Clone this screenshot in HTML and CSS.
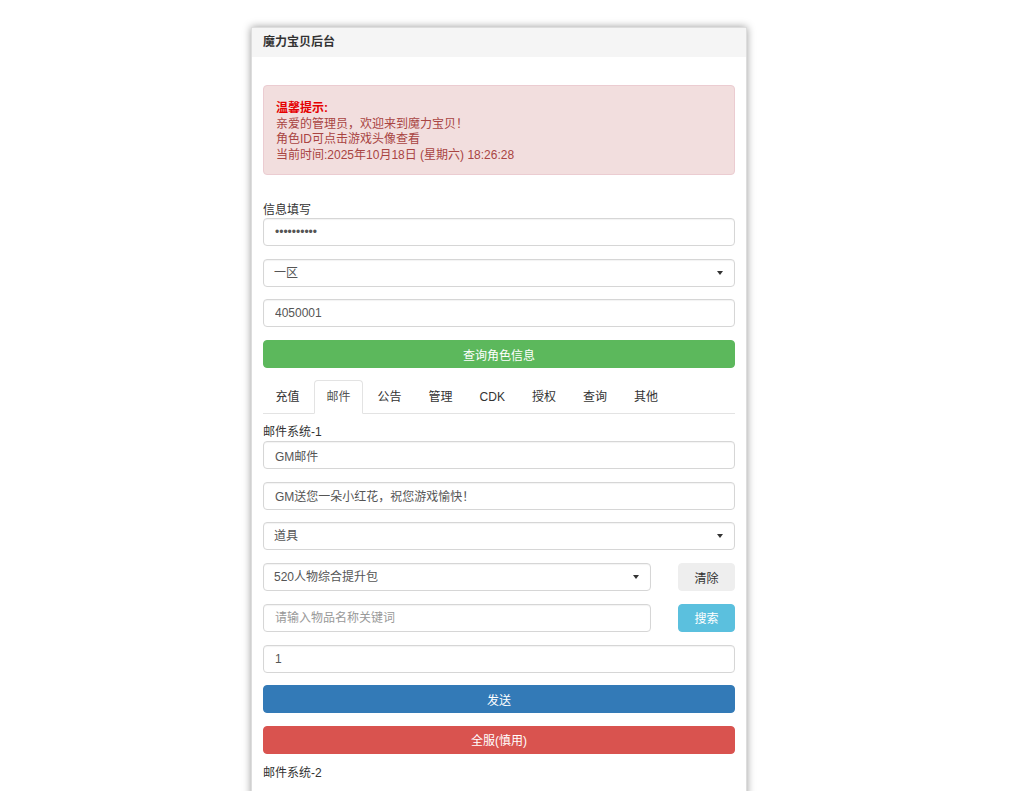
FILE: index.html
```html
<!DOCTYPE html>
<html lang="zh-CN">
<head>
    <meta charset="UTF-8">
    <title>魔力宝贝后台</title>
    <link rel="stylesheet" href="styles.css">
</head>
<body>
<div class="panel">
    <div class="panel-heading">魔力宝贝后台</div>
    <div class="panel-body">
        <!-- 提示 -->
        <div class="alert">
            <b class="alert-title">温馨提示:</b><br>
            亲爱的管理员，欢迎来到魔力宝贝！<br>
            角色ID可点击游戏头像查看<br>
            当前时间:2025年10月18日 (星期六) 18:26:28
        </div>

        <label class="label label-info">信息填写</label>
        <input class="form-control" type="password" value="1234567890">
        <div class="select-wrap">
            <select class="form-control">
                <option>一区</option>
                <option>二区</option>
            </select>
        </div>
        <input class="form-control" type="text" value="4050001">
        <button class="btn btn-success">查询角色信息</button>

        <!-- 选项卡 -->
        <ul class="nav-tabs">
            <li><a href="#">充值</a></li>
            <li class="active"><a href="#">邮件</a></li>
            <li><a href="#">公告</a></li>
            <li><a href="#">管理</a></li>
            <li><a href="#">CDK</a></li>
            <li><a href="#">授权</a></li>
            <li><a href="#">查询</a></li>
            <li><a href="#">其他</a></li>
        </ul>

        <div class="tab-pane">
            <label class="label label-tab">邮件系统-1</label>
            <input class="form-control" type="text" value="GM邮件">
            <input class="form-control" type="text" value="GM送您一朵小红花，祝您游戏愉快！">
            <div class="select-wrap">
                <select class="form-control">
                    <option>道具</option>
                    <option>宠物</option>
                </select>
            </div>
            <div class="row">
                <div class="select-wrap">
                    <select class="form-control">
                        <option>520人物综合提升包</option>
                    </select>
                </div>
                <button class="btn btn-default">清除</button>
            </div>
            <div class="row">
                <input class="form-control" type="text" placeholder="请输入物品名称关键词">
                <button class="btn btn-info">搜索</button>
            </div>
            <input class="form-control" type="text" value="1">
            <button class="btn btn-primary">发送</button>
            <button class="btn btn-danger">全服(慎用)</button>

            <label class="label label-sub">邮件系统-2</label>
            <input class="form-control form-gap" type="text" value="GM邮件">
            <input class="form-control" type="text" placeholder="邮件内容">
        </div>
    </div>
</div>
</body>
</html>
```

FILE: styles.css
```css
* {
    margin: 0;
    padding: 0;
    box-sizing: border-box;
}

body {
    background: #fff;
    font-family: "Liberation Sans", "Noto Sans CJK SC", sans-serif;
    font-size: 12px;
    line-height: 17px;
    color: #333;
    padding: 27px 26px 40px 0;
}

ul {
    list-style: none;
}

.panel {
    width: 496px;
    margin: 0 auto;
    background: #fff;
    border: 1px solid #ddd;
    box-shadow: 0 0 8px rgba(0, 0, 0, .4);
}

.panel-heading {
    height: 29px;
    padding: 6px 11px;
    background: #f5f5f5;
    font-weight: bold;
    color: #333;
}

.panel-body {
    padding: 28px 11px 0;
}

.alert {
    height: 90px;
    padding: 15px 12px 13px;
    margin-bottom: 27px;
    background: #f2dede;
    border: 1px solid #ebccd1;
    border-radius: 4px;
    color: #a94442;
    line-height: 15.7px;
}

.alert-title {
    color: #e50000;
}

.label {
    display: block;
}

.label-info {
    margin-bottom: -1px;
}

.label-tab {
    margin-top: 10px;
}

.label-sub {
    margin-top: -2px;
}

.form-control {
    display: block;
    width: 100%;
    height: 28px;
    padding: 0 11px;
    margin-bottom: 12.7px;
    border: 1px solid #d6d6d6;
    border-radius: 4px;
    background: #fff;
    font-family: inherit;
    font-size: 12px;
    color: #555;
    box-shadow: inset 0 1px 1px rgba(0, 0, 0, .05);
    outline: none;
}

.form-gap {
    margin-top: 14px;
}

.form-control::placeholder {
    color: #999;
}

select.form-control {
    appearance: none;
    -webkit-appearance: none;
    padding-left: 10px;
}

.select-wrap {
    position: relative;
}

/* 下拉小三角 */
.select-wrap::after {
    content: "";
    position: absolute;
    right: 12px;
    top: 12px;
    border-left: 3.5px solid transparent;
    border-right: 3.5px solid transparent;
    border-top: 4px solid #333;
    pointer-events: none;
}

.btn {
    display: block;
    width: 100%;
    height: 28px;
    margin-bottom: 12.7px;
    border: 1px solid transparent;
    border-radius: 4px;
    font-family: inherit;
    font-size: 12px;
    color: #fff;
    cursor: pointer;
}

.btn-success {
    background: #5cb85c;
    border-color: #5cb85c;
}

.btn-primary {
    background: #337ab7;
    border-color: #337ab7;
}

.btn-danger {
    background: #d9534f;
    border-color: #d9534f;
}

.btn-info {
    background: #5bc0de;
    border-color: #5bc0de;
}

.btn-default {
    background: #eee;
    border-color: #eee;
    color: #333;
}

.row {
    display: grid;
    grid-template-columns: 1fr 57px;
    column-gap: 27px;
}

.nav-tabs {
    display: flex;
    height: 34px;
    margin-top: -0.7px;
    border-bottom: 1px solid #e3e3e3;
}

.nav-tabs li {
    margin-right: 2px;
    margin-bottom: -1px;
}

.nav-tabs a {
    display: block;
    height: 34px;
    padding: 8px 11.5px;
    border: 1px solid transparent;
    border-radius: 4px 4px 0 0;
    color: #333;
    text-decoration: none;
}

.nav-tabs li.active a {
    border-color: #e3e3e3 #e3e3e3 transparent;
    background: #fff;
    color: #555;
}
```
